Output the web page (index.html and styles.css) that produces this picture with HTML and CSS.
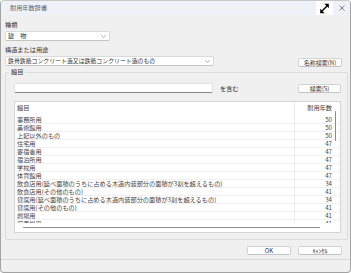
FILE: index.html
```html
<!DOCTYPE html>
<html lang="ja">
<head>
    <meta charset="UTF-8">
    <meta name="viewport" content="width=device-width, initial-scale=1.0">
    <title>耐用年数辞書</title>
    <link rel="stylesheet" href="styles.css">
</head>
<body>
    <div class="window">
        <div class="titlebar">
            <span class="title">耐用年数辞書</span>
            <div class="maximize">
                <svg width="17" height="15" viewBox="0 0 17 15">
                    <path d="M6 10 L11 5" stroke="#000" stroke-width="1.4"/>
                    <polygon points="12.8,2.8 8.3,2.8 12.8,7.3" fill="#000"/>
                    <polygon points="4.2,12.2 4.2,7.7 8.7,12.2" fill="#000"/>
                </svg>
            </div>
            <div class="close">
                <svg width="6" height="6" viewBox="0 0 6 6">
                    <path d="M0.5 0.5 L5.5 5.5 M5.5 0.5 L0.5 5.5" stroke="#666" stroke-width="0.8"/>
                </svg>
            </div>
        </div>

        <div class="content">
            <div class="label first">種類</div>
            <div class="select select-short">
                <span>建　物</span>
                <svg width="5" height="3" viewBox="0 0 5 3"><path d="M0.3 0.3 L2.5 2.5 L4.7 0.3" stroke="#777" stroke-width="0.6" fill="none"/></svg>
            </div>

            <div class="label second">構造または用途</div>
            <div class="row-struct">
                <div class="select select-long">
                    <span>鉄骨鉄筋コンクリート造又は鉄筋コンクリート造のもの</span>
                    <svg width="5" height="3" viewBox="0 0 5 3"><path d="M0.3 0.3 L2.5 2.5 L4.7 0.3" stroke="#777" stroke-width="0.6" fill="none"/></svg>
                </div>
                <button class="btn btn-name">名称検索(N)</button>
            </div>

            <div class="group">
                <span class="group-label">細目</span>
                <div class="row-search">
                    <div class="textbox"></div>
                    <span class="contains">を含む</span>
                    <button class="btn btn-search">検索(S)</button>
                </div>

                <div class="list">
                    <div class="list-head">
                        <div class="cell name">細目</div>
                        <div class="cell years">耐用年数</div>
                    </div>
                    <div class="list-rows" id="rows"></div>
                    <div class="hscroll"><div class="hthumb"></div></div>
                    <div class="vthumb"></div>
                </div>
            </div>

            <div class="actions">
                <button class="btn btn-ok">OK</button>
                <button class="btn btn-cancel">ｷｬﾝｾﾙ</button>
            </div>
        </div>
        <div class="statusbar"></div>
    </div>

    <script>
        const items = [
            ['事務所用', 50],
            ['美術館用', 50],
            ['上記以外のもの', 50],
            ['住宅用', 47],
            ['寄宿舎用', 47],
            ['宿泊所用', 47],
            ['学校用', 47],
            ['体育館用', 47],
            ['飲食店用(延べ面積のうちに占める木造内装部分の面積が3割を超えるもの)', 34],
            ['飲食店用(その他のもの)', 41],
            ['貸席用(延べ面積のうちに占める木造内装部分の面積が3割を超えるもの)', 34],
            ['貸席用(その他のもの)', 41],
            ['劇場用', 41],
            ['演奏場用', 41]
        ];
        const rows = document.getElementById('rows');
        items.forEach(item => {
            const row = document.createElement('div');
            row.className = 'list-row';
            row.innerHTML = `<div class="cell name">${item[0]}</div><div class="cell years">${item[1]}</div>`;
            rows.appendChild(row);
        });
    </script>
</body>
</html>
```

FILE: styles.css
```css
* {
    box-sizing: border-box;
}
body {
    margin: 0;
    background: #ffffff;
    font-family: "Noto Sans CJK JP", "Noto Sans", sans-serif;
    font-size: 6.2px;
    color: #333;
}
.window {
    width: 351px;
    height: 273px;
    border: 1px solid #a3a3a3;
    border-top-color: #c8c8c8;
    border-radius: 4px;
    background: #f0f0f0;
    overflow: hidden;
    display: flex;
    flex-direction: column;
}
.titlebar {
    height: 14px;
    background: #eef2f8;
    display: flex;
    align-items: center;
    flex-shrink: 0;
}
.title {
    padding-left: 9px;
    color: #666;
    flex: 1;
    line-height: 14px;
}
.maximize {
    width: 17px;
    height: 14px;
    background: #fff;
    display: flex;
    align-items: center;
    justify-content: center;
}
.close {
    width: 17px;
    height: 14px;
    display: flex;
    align-items: center;
    justify-content: center;
}
.content {
    padding: 0 2px 0 4px;
    flex-shrink: 0;
}
.label {
    height: 8px;
    line-height: 8px;
    color: #333;
}
.label.first {
    margin-top: 6px;
}
.label.second {
    margin-top: 5px;
}
.select {
    height: 10px;
    background: #fff;
    border: 1px solid #dadada;
    border-bottom-color: #c4c4c4;
    border-radius: 2px;
    display: flex;
    align-items: center;
    justify-content: space-between;
    padding: 0 3px 0 2px;
    color: #333;
}
.select span {
    line-height: 8px;
}
.select-short {
    margin-top: 2px;
    width: 105px;
}
.select-long {
    width: 209px;
}
.select-long span {
    font-size: 5.9px;
}
.row-struct {
    margin-top: 2px;
    height: 11px;
    display: flex;
    justify-content: space-between;
    align-items: flex-start;
    padding-right: 6px;
}
.btn {
    height: 9px;
    width: 44px;
    padding: 0;
    background: #fdfdfd;
    border: 1px solid #d3d3d3;
    border-bottom-color: #c2c2c2;
    border-radius: 2px;
    font-family: inherit;
    font-size: 6px;
    line-height: 7px;
    color: #333;
}
.btn-name {
    margin-top: 2px;
}
.group {
    position: relative;
    margin-top: 5px;
    padding: 10px 6px 6px 8px;
    border: 1px solid #dcdcdc;
    border-radius: 2px;
    height: 168px;
    width: 343px;
}
.group-label {
    position: absolute;
    top: -5px;
    left: 3px;
    padding: 0 2px;
    line-height: 8px;
    background: #f0f0f0;
    color: #333;
}
.row-search {
    display: flex;
    align-items: center;
    height: 10px;
}
.textbox {
    width: 199px;
    height: 10px;
    background: #fff;
    border: 1px solid #e2e2e2;
    border-bottom: 1px solid #8a8a8a;
    border-radius: 2px;
}
.contains {
    margin-left: 7px;
    flex: 1;
}
.btn-search {
    margin-top: 1px;
    width: 43px;
}
.list {
    position: relative;
    margin-top: 8px;
    height: 132px;
    width: 327px;
    background: #fff;
    border: 1px solid #d6d6d6;
    display: flex;
    flex-direction: column;
}
.list-head {
    display: flex;
    height: 14px;
    line-height: 12px;
    flex-shrink: 0;
}
.list-rows {
    flex: 1;
    overflow: hidden;
}
.list-row {
    display: flex;
    height: 8px;
    line-height: 7px;
    border-bottom: 1px solid #f0f0f0;
}
.cell.name {
    width: 280px;
    padding-left: 2px;
    white-space: nowrap;
    overflow: hidden;
    border-right: 1px solid #ececec;
    color: #444;
}
.cell.years {
    flex: 1;
    text-align: right;
    padding-right: 8px;
    color: #444;
}
.hscroll {
    height: 9px;
    flex-shrink: 0;
    display: flex;
    align-items: center;
    padding-left: 8px;
}
.hthumb {
    width: 297px;
    height: 1.5px;
    background: #8c8c8c;
    border-radius: 1px;
}
.vthumb {
    position: absolute;
    right: 4px;
    top: 9px;
    width: 1.5px;
    height: 30px;
    background: #8c8c8c;
    border-radius: 1px;
}
.actions {
    margin-top: 6px;
    display: flex;
    justify-content: flex-end;
    gap: 7px;
    padding-right: 6px;
}
.statusbar {
    margin-top: 4px;
    border-top: 1px solid #d8d8d8;
    flex: 1;
}
```
